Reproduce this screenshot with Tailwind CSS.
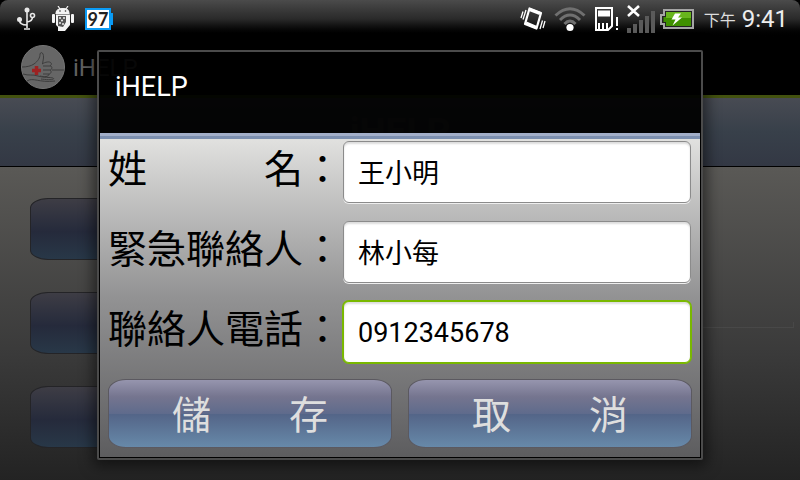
<!DOCTYPE html>
<html lang="zh-Hant">
<head>
<meta charset="utf-8">
<meta name="viewport" content="width=device-width, initial-scale=1">
<title>iHELP</title>
<script src="https://cdn.jsdelivr.net/npm/@tailwindcss/browser@4"></script>
</head>
<body class="bg-black font-['Roboto','Noto_Sans_CJK_TC',sans-serif]">
<div class="relative flex min-h-screen flex-col overflow-hidden bg-black">

  <!-- Status bar -->
  <header class="flex h-[38px] items-center justify-between rounded-t-lg bg-linear-to-b from-[#4b4b4b] via-[#2a2a2a] via-50% to-black pl-4 pr-3 text-white">
    <div class="flex items-center gap-3">
      <svg class="h-6 w-5" viewBox="0 0 20 24" fill="none" stroke="#e8e8e8" stroke-width="1.6" aria-label="USB">
        <path d="M11 3v18M8 22h6M3.500 13c0 3.500 2.500 5 7.500 5M16.500 10c0 3-2 4.500-5.500 5"/>
        <circle cx="11" cy="3" r="2.500" fill="#e8e8e8" stroke="none"/>
        <circle cx="3.500" cy="12.500" r="2.500" fill="#e8e8e8" stroke="none"/>
        <circle cx="16.500" cy="8.500" r="2"/>
      </svg>
      <svg class="ml-[3px] h-[26px] w-6" viewBox="0 0 24 26" fill="#f4f4f4" aria-label="Android">
        <path d="M5 7.500C5 4 8 2.500 12 2.500S18 4 18 7.500zM7 0l2 3M17 0l-2 3" stroke="#f4f4f4" stroke-width="1.200"/>
        <circle cx="9" cy="5" r=".8" fill="#333"/><circle cx="14.500" cy="5" r=".8" fill="#333"/>
        <rect x="1" y="8" width="3" height="9" rx="1"/><rect x="20" y="8" width="3" height="9" rx="1"/>
        <path d="M5 8.500h14v10.500l-5 6H7V21l-2-2z"/>
        <path d="M7 10h8v6l-3 5-5-1z" fill="#555"/>
        <g fill="#eee"><circle cx="9" cy="12" r="1"/><circle cx="13" cy="12" r="1"/><circle cx="11" cy="14.500" r="1"/><circle cx="9" cy="17" r="1"/><circle cx="12" cy="18" r="1"/></g>
      </svg>
      <div class="-ml-0.5 flex items-center">
        <span class="flex h-[22px] w-[26px] items-center justify-center border-2 border-[#0a9bf5] bg-white font-['Lato',sans-serif] text-lg font-bold text-[#222]">97</span>
        <span class="h-3 w-[2px] bg-[#0a9bf5]"></span>
      </div>
    </div>
    <div class="flex items-center">
      <svg class="h-[26px] w-[26px]" viewBox="0 0 26 26" fill="none" stroke="#fff" aria-label="Vibrate">
        <path d="M9.500 2.500L21 7 16.500 22.500 5 18z" stroke-width="2.200" stroke-linejoin="round"/>
        <path d="M9.500 3.500l10.500 4M6 17l10.500 4.500" stroke-width="3"/>
        <path d="M3 5.500L1 12M6 4L3 13.500M22.500 14.500L20 23M25 15l-2 7" stroke-width="1.300"/>
      </svg>
      <svg class="ml-2 h-[26px] w-8" viewBox="0 0 32 26" fill="none" stroke="#707070" stroke-width="3" aria-label="Wi-Fi">
        <path d="M1.500 9.500Q16-4 30.500 9.500M6 14Q16 4 26 14M10.500 18Q16 12 21.500 18"/>
        <circle cx="16" cy="21.500" r="3.600" fill="#fff" stroke="none"/>
      </svg>
      <svg class="ml-[9px] h-6 w-6" viewBox="0 0 24 24" aria-label="Memory card">
        <path d="M1 1h16v18l-4 4H1z" fill="none" stroke="#fff" stroke-width="2"/>
        <path d="M3 3.500h12v6H3zM3 23v-7h2v7zM7 23v-7h2v7zM11 23v-7h2v6zM21 10h2v9h-2zM21 21h2v2h-2z" fill="#fff"/>
      </svg>
      <svg class="ml-2 h-7 w-7" viewBox="0 0 28 28" aria-label="No signal">
        <path d="M0 23h4v5H0zM6 19h4v9H6zM12 15h4v13h-4zM18 11h4v17h-4zM24 6h4v22h-4z" fill="#5a5a5a"/>
        <path d="M1 1l11 10M12 1L1 11" stroke="#fff" stroke-width="2.600"/>
      </svg>
      <svg class="ml-[5px] h-5 w-[34px]" viewBox="0 0 34 20" aria-label="Charging">
        <path d="M4 1h29v18H4v-4H1V6h3z" fill="#222" stroke="#a5a5a5" stroke-width="2"/>
        <path d="M6 3h25v14H6v-4H3.500V8H6z" fill="#3f9000"/>
        <path d="M6 3h25v6H6z" fill="#68b51d"/>
        <path d="M15 4.500h6L18 8.500h4l-9.500 8 3-6h-4z" fill="#fff"/>
      </svg>
      <span class="ml-2.5 pt-1 text-base leading-9 text-[#ddd]">下午</span>
      <span class="ml-1.5 text-2xl leading-9 text-[#eee]">9:41</span>
    </div>
  </header>

  <!-- Underlying screen, dimmed -->
  <div class="flex h-[60px] items-center gap-2 border-b-3 border-[#43520f] bg-black pl-[21px] text-2xl text-[#606060]">
    <svg class="size-11" viewBox="0 0 44 44" fill="none" stroke="#3d3d3d" aria-hidden="true">
      <circle cx="22" cy="22" r="21.500" fill="#666" stroke="#777"/>
      <path d="M1 22c5 0 9-1 12-3 4-3 6-6 6-10 1-3 4-1 3.500 4l-1 6M21 19c3-2 8-3 9-1 1 1 0 2-1 3 3 0 2 4 0 4 2 1 1 4-1 4 0 3-5 3-9 2M29 21h-7M29 25h-7M28 29h-6M31 25h12M2 29c6 2 9 0 15 2s12 1 15 2c3 2-5 2-12 1M6 36c6-4 12 2 28 0"/>
      <path d="M15.500 21v9M11 25.500h9" stroke="#9c2222" stroke-width="3.500"/>
    </svg>
    <span class="pt-0.5">iHELP</span>
  </div>
  <div class="flex h-[69px] items-center justify-center border-b border-black bg-linear-to-b from-[#484b53] via-[#38404a] via-50% to-[#333844] text-[37px] font-bold text-[#555]">iHELP</div>
  <main class="relative flex flex-1 flex-col gap-8 bg-linear-to-b from-[#5a5956] via-[#3a3a3a] via-60% to-[#232323] pb-[31px] pl-[30px] pr-1.5 pt-[31px]">
    <div class="h-[62px] w-64 rounded-[18px/10px] border border-[#242427] bg-linear-to-b from-[#3e3d45] via-[#252a3b] via-55% to-[#283848]"></div>
    <div class="h-[62px] w-64 rounded-[18px/10px] border border-[#242427] bg-linear-to-b from-[#3e3d45] via-[#252a3b] via-55% to-[#283848]"></div>
    <div class="h-[62px] w-64 rounded-[18px/10px] border border-[#242427] bg-linear-to-b from-[#3e3d45] via-[#252a3b] via-55% to-[#283848]"></div>
    <div class="absolute right-1.5 top-[155px] h-1.5 w-1/2 border-b border-r border-[#484848]"></div>
  </main>

  <!-- Dialog -->
  <div class="absolute inset-0 flex items-start justify-center pt-[50px]">
    <form role="dialog" aria-labelledby="dialog-title" class="w-[606px] max-w-full rounded-xs border-2 border-[#4b4b4b] shadow-[0_2px_14px_4px_rgba(0,0,0,0.5)]">
      <div class="border border-black">
        <h1 id="dialog-title" class="h-20 bg-black/93 pl-[15px] text-[27px] leading-[68px] text-white">iHELP</h1>
        <div class="h-1.5 bg-linear-to-b from-[#a3afc9] from-50% to-[#7d90b0] to-50%"></div>
        <div class="flex flex-col bg-linear-to-b from-[#e1e1df] via-[#929293] via-50% to-[#5d5d5f] px-2 pb-[9px] pt-0.5">
          <div class="flex flex-col gap-[18px] pr-px">
            <div class="flex">
              <label for="name" class="w-[235px] shrink-0 whitespace-pre text-[39px] leading-[58px] text-black">姓　　　名：</label>
              <input id="name" type="text" value="王小明" class="h-[62px] min-w-0 flex-1 rounded-md border border-[#8b8b8b] bg-white px-[14px] pb-0.5 text-[27px] text-black shadow-[inset_0_2px_2px_#ddd,0_1px_0_#eee] outline-none">
            </div>
            <div class="flex">
              <label for="contact" class="w-[235px] shrink-0 whitespace-pre text-[39px] leading-[58px] text-black">緊急聯絡人：</label>
              <input id="contact" type="text" value="林小每" class="h-[62px] min-w-0 flex-1 rounded-md border border-[#8b8b8b] bg-white px-[14px] pb-0.5 text-[27px] text-black shadow-[inset_0_2px_2px_#ddd,0_1px_0_#eee] outline-none">
            </div>
            <div class="flex">
              <label for="phone" class="w-[235px] shrink-0 whitespace-pre text-[39px] leading-[58px] text-black">聯絡人電話：</label>
              <input id="phone" type="tel" value="0912345678" class="h-[62px] min-w-0 flex-1 rounded-md border border-[#79b800] bg-white px-[14px] pt-0.5 text-[27px] text-black shadow-[inset_0_2px_2px_#ddd,0_0_0_1px_#79b800] outline-none">
            </div>
          </div>
          <div class="mt-4 grid grid-cols-2 gap-4">
            <button type="submit" class="h-[69px] whitespace-pre rounded-[18px/12px] border border-[#5b5960] bg-[linear-gradient(#9695ae,#75758f_25%,#5f6b8c_50%,#536487_50%,#6789a9)] pt-1.5 text-[39px] leading-none text-[#dedede]">儲　　存</button>
            <button type="button" class="h-[69px] whitespace-pre rounded-[18px/12px] border border-[#5b5960] bg-[linear-gradient(#9695ae,#75758f_25%,#5f6b8c_50%,#536487_50%,#6789a9)] pt-1.5 text-[39px] leading-none text-[#dedede]">取　　消</button>
          </div>
        </div>
      </div>
    </form>
  </div>
</div>
</body>
</html>
